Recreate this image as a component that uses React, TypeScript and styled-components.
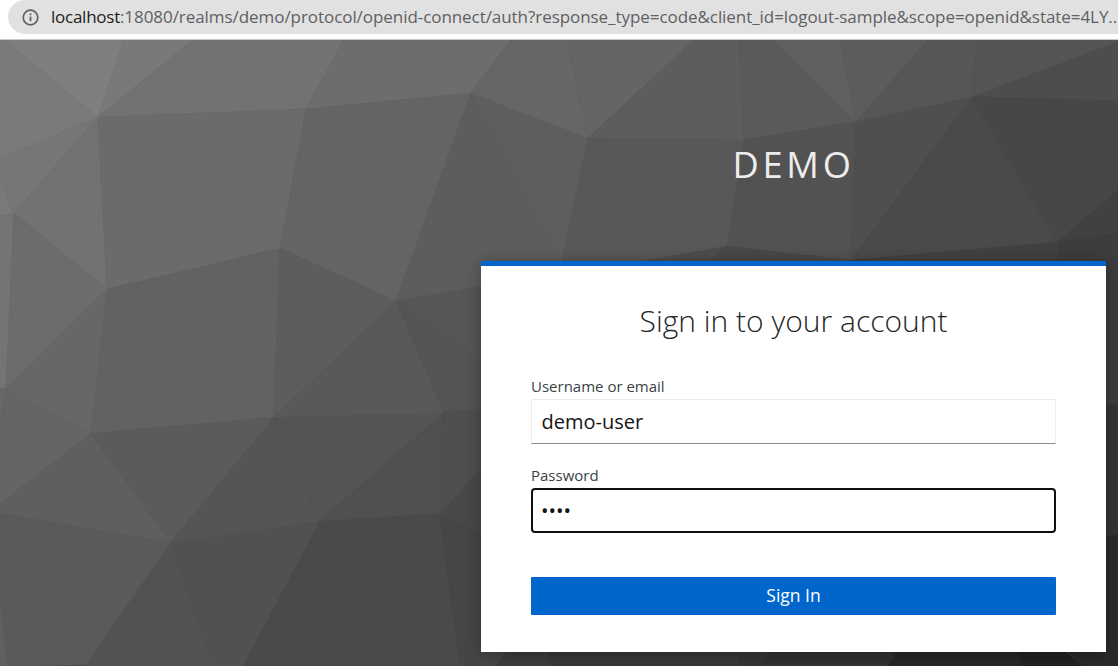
import React from "react";
import styled, { createGlobalStyle } from "styled-components";

const GlobalStyle = createGlobalStyle`
  *, *::before, *::after { box-sizing: border-box; }
  body { margin: 0; background: #fff; overflow: hidden; }
`;

const Window = styled.div`
  display: flex;
  flex-direction: column;
  width: 1118px;
  height: 666px;
  overflow: hidden;
  font-family: "Open Sans", "Noto Sans", sans-serif;
`;

const AddressBar = styled.header`
  flex: none;
  height: 40px;
  padding-left: 8px;
  background: #fff;
  border-bottom: 1px solid #c9cbcb;
`;

const Omnibox = styled.div`
  display: flex;
  align-items: center;
  height: 34px;
  padding-left: 14px;
  background: #e1e1e1;
  border-radius: 17px 0 0 17px;
`;

const InfoIcon = styled.svg`
  flex: none;
  width: 17px;
  height: 17px;
  margin-right: 12px;
`;

const Url = styled.span`
  white-space: nowrap;
  font-size: 17px;
  line-height: 34px;
  letter-spacing: -0.06px;
  color: #5f6062;
`;

const Host = styled.span`
  letter-spacing: -0.25px;
  color: #1d1d20;
`;

const Stage = styled.main`
  position: relative;
  flex: 1;
  display: flex;
  flex-direction: column;
  align-items: flex-end;
  padding-right: 12px;
  overflow: hidden;
`;

const Backdrop = styled.svg`
  position: absolute;
  inset: 0;
  width: 1118px;
  height: 626px;
`;

const Realm = styled.h1`
  position: relative;
  width: 625px;
  height: 221px;
  margin: 0;
  padding-top: 97px;
  font-size: 36.25px;
  font-weight: 400;
  line-height: 54px;
  letter-spacing: 3.75px;
  text-align: center;
  text-transform: uppercase;
  color: #ededed;
`;

const Card = styled.section`
  position: relative;
  display: flex;
  flex-direction: column;
  width: 625px;
  height: 391px;
  padding: 31px 50px 0;
  background: #fff;
  border-top: 5px solid #0066cc;
  box-shadow: 0 5px 20px rgba(3, 3, 3, 0.2), 0 0 10px rgba(3, 3, 3, 0.12);
`;

const Title = styled.h2`
  margin: 0 0 30px;
  font-size: 30px;
  font-weight: 300;
  line-height: 47px;
  text-align: center;
  color: #262626;
`;

const Form = styled.form`
  display: flex;
  flex-direction: column;
`;

const Field = styled.div`
  display: flex;
  flex-direction: column;
  margin-bottom: 19px;
`;

const Label = styled.label`
  height: 25px;
  font-size: 15px;
  line-height: 25px;
  color: #393f44;
`;

const Input = styled.input<{ $active?: boolean }>`
  height: 45px;
  margin: 0;
  padding: ${(p) => (p.$active ? "0 8px" : "0 9.5px")};
  border: ${(p) => (p.$active ? "2px solid #101010" : "1px solid #ededed")};
  border-bottom-color: ${(p) => (p.$active ? "#101010" : "#8a8d90")};
  border-radius: ${(p) => (p.$active ? "4px" : "0")};
  outline: none;
  background: #fff;
  font-family: inherit;
  font-size: 20px;
  color: #151515;
`;

const Submit = styled.button`
  height: 38px;
  margin-top: 25px;
  padding: 0 0 2px;
  border: 0;
  border-radius: 1px;
  background: #0066cc;
  font-family: inherit;
  font-size: 17.5px;
  line-height: 36px;
  color: #fff;
`;

const facets: [string, string][] = [
  ["#7a7a7a", "0,40 5,40 98,117 0,159"],
  ["#7f7f7f", "5,40 123,40 98,117"],
  ["#797979", "123,40 193,40 98,117"],
  ["#727272", "193,40 344,40 306,109 98,117"],
  ["#767676", "0,159 98,117 14,213 0,183"],
  ["#7a7a7a", "0,183 14,213 0,216"],
  ["#727272", "98,117 107,289 14,213"],
  ["#747474", "0,216 14,213 6,388 0,388"],
  ["#6c6c6c", "14,213 107,289 6,388"],
  ["#6b6b6b", "98,117 306,109 280,248 107,289"],
  ["#676767", "107,289 91,433 6,388"],
  ["#6d6d6d", "344,40 511,40 471,93 306,109"],
  ["#646464", "306,109 471,93 396,301 280,248"],
  ["#626262", "107,289 280,248 274,417 91,433"],
  ["#5d5d5d", "280,248 396,301 274,417"],
  ["#5d5d5d", "471,93 562,262 562,274 396,301"],
  ["#5e5e5e", "471,93 588,138 562,262"],
  ["#666666", "511,40 568,40 588,138 471,93"],
  ["#656565", "568,40 694,40 588,138"],
  ["#5d5d5d", "694,40 739,40 744,140 588,138"],
  ["#5a5a5a", "739,40 774,40 856,122 744,140"],
  ["#606060", "774,40 840,40 856,122"],
  ["#5c5c5c", "840,40 928,40 856,122"],
  ["#565656", "928,40 977,40 972,97 856,122"],
  ["#545454", "977,40 1118,40 1118,42 972,97"],
  ["#4d4d4d", "1118,42 1118,101 972,97"],
  ["#585858", "588,138 744,140 727,246"],
  ["#585858", "588,138 727,246 638,262 562,262"],
  ["#525252", "744,140 856,122 851,260 727,246"],
  ["#4f4f4f", "856,122 972,97 851,260"],
  ["#4a4a4a", "972,97 1057,242 851,260"],
  ["#474747", "972,97 1118,101 1118,190 1057,242"],
  ["#414141", "1118,190 1118,233 1057,242"],
  ["#3d3d3d", "1057,242 1118,233 1118,405 1090,411 1058,262"],
  ["#4d4d4d", "638,262 727,246 708,262"],
  ["#484848", "708,262 727,246 851,260 851,266 708,266"],
  ["#414141", "851,260 1057,242 1058,266 851,266"],
  ["#676767", "0,388 6,388 0,434"],
  ["#656565", "6,388 91,433 0,503 0,434"],
  ["#5f5f5f", "91,433 171,542 0,513 0,503"],
  ["#5b5b5b", "91,433 274,417 171,542"],
  ["#5a5a5a", "0,513 171,542 86,664 7,666 0,601"],
  ["#606060", "0,601 7,666 0,666"],
  ["#4c4c4c", "86,664 88,666 60,666"],
  ["#525252", "171,542 215,666 88,666 86,664"],
  ["#515151", "171,542 320,521 243,666 215,666"],
  ["#555555", "274,417 320,521 171,542"],
  ["#545454", "274,417 444,412 320,521"],
  ["#595959", "396,301 444,412 274,417"],
  ["#545454", "396,301 500,374 500,407 444,412"],
  ["#565656", "396,301 500,283 500,374"],
  ["#505050", "444,412 440,513 320,521"],
  ["#4f4f4f", "444,412 500,407 500,449 440,513"],
  ["#494949", "440,513 500,449 500,543"],
  ["#4a4a4a", "320,521 440,513 460,666 243,666"],
  ["#464646", "440,513 500,543 520,630 497,666 460,666"],
  ["#3d3d3d", "497,666 520,630 549,630 549,666"],
  ["#393939", "549,630 739,630 739,666 549,666"],
  ["#363636", "739,630 790,630 758,666 739,666"],
  ["#323232", "790,630 911,630 887,666 758,666"],
  ["#282828", "911,630 1010,630 1023,666 887,666"],
  ["#222222", "1010,630 1040,630 1084,666 1023,666"],
  ["#353535", "1090,409 1118,403 1118,534 1090,541"],
  ["#2a2a2a", "1090,541 1118,534 1118,666 1084,666 1060,644"],
];

function FacetedBackdrop() {
  return (
    <Backdrop viewBox="0 40 1118 625.3" preserveAspectRatio="none" aria-hidden="true">
      <rect y="40" width="1118" height="626" fill="#4a4a4a" />
      {facets.map(([fill, points]) => (
        <polygon key={points} points={points} fill={fill} stroke={fill} strokeWidth="0.5" />
      ))}
    </Backdrop>
  );
}

export default function App() {
  return (
    <Window>
      <GlobalStyle />
      <AddressBar>
        <Omnibox>
          <InfoIcon viewBox="0 0 17 17" fill="none">
            <circle cx="8.5" cy="8.5" r="7.3" stroke="#5f6368" strokeWidth="1.7" />
            <path d="M8.5 7.6v4.6M8.5 4.5v1.7" stroke="#5f6368" strokeWidth="1.8" />
          </InfoIcon>
          <Url>
            <Host>localhost</Host>
            :18080/realms/demo/protocol/openid-connect/auth?response_type=code&amp;client_id=logout-sample&amp;scope=openid&amp;state=4LY...
          </Url>
        </Omnibox>
      </AddressBar>
      <Stage>
        <FacetedBackdrop />
        <Realm>Demo</Realm>
        <Card>
          <Title>Sign in to your account</Title>
          <Form onSubmit={(e) => e.preventDefault()}>
            <Field>
              <Label htmlFor="username">Username or email</Label>
              <Input id="username" type="text" defaultValue="demo-user" />
            </Field>
            <Field>
              <Label htmlFor="password">Password</Label>
              <Input id="password" type="password" defaultValue="demo" $active />
            </Field>
            <Submit type="submit">Sign In</Submit>
          </Form>
        </Card>
      </Stage>
    </Window>
  );
}
